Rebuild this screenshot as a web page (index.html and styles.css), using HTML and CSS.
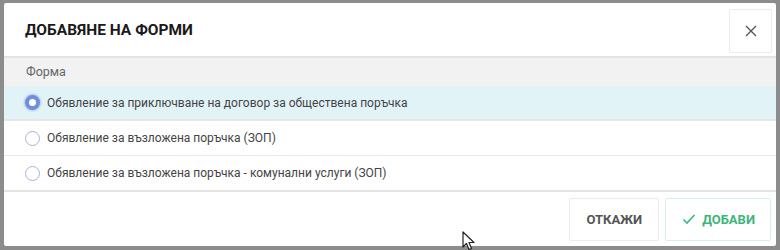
FILE: index.html
```html
<!DOCTYPE html>
<html>
<head>
    <meta charset="UTF-8">
    <title>Добавяне на форми</title>
    <link rel="stylesheet" href="styles.css">
</head>
<body>
    <div class="modal">
        <div class="modal-head">
            <h3>ДОБАВЯНЕ НА ФОРМИ</h3>
            <button class="close-btn" type="button">
                <svg width="12" height="12" viewBox="0 0 12 12"><path d="M1 1L11 11M11 1L1 11" stroke="#555" stroke-width="1.4"/></svg>
            </button>
        </div>
        <div class="modal-body">
            <div class="group-label">Форма</div>
            <ul class="options">
                <li class="selected"><span class="radio"></span>Обявление за приключване на договор за обществена поръчка</li>
                <li><span class="radio"></span>Обявление за възложена поръчка (ЗОП)</li>
                <li><span class="radio"></span>Обявление за възложена поръчка - комунални услуги (ЗОП)</li>
            </ul>
        </div>
        <div class="modal-foot">
            <button class="btn" type="button">ОТКАЖИ</button>
            <button class="btn btn-ok" type="button">
                <svg width="14" height="12" viewBox="0 0 14 12"><path d="M1.5 6.5L5 10L12.5 2" fill="none" stroke="#3db57b" stroke-width="1.6"/></svg>
                ДОБАВИ
            </button>
        </div>
    </div>
    <svg class="cursor" width="14" height="20" viewBox="0 0 14 20"><path d="M1 1L1 16L4.5 12.5L7 18.5L9.5 17.5L7 11.5L12 11.5Z" fill="#fff" stroke="#222" stroke-width="1.2" stroke-linejoin="round"/></svg>
</body>
</html>
```

FILE: styles.css
```css
* {
    margin: 0;
    padding: 0;
    box-sizing: border-box;
}
html, body {
    height: 100%;
}
body {
    background-color: #8c8c8c;
    font-family: Roboto, "Noto Sans", Arial, sans-serif;
    color: #444;
    padding: 3px 4px 4px 4px;
    position: relative;
}
ul, li {
    list-style: none;
}
button {
    font-family: inherit;
    background: #fff;
    cursor: pointer;
}
.modal {
    background-color: #fff;
    height: 243px;
    display: flex;
    flex-direction: column;
    border-radius: 2px;
}
.modal-head {
    height: 55px;
    display: flex;
    align-items: center;
    justify-content: space-between;
    padding: 0 4px 0 21px;
    border-bottom: 2px solid #e4e4e4;
}
.modal-head h3 {
    font-size: 15.5px;
    font-weight: 700;
    color: #1a1a1a;
}
.close-btn {
    width: 43px;
    height: 44px;
    border: 1px solid #ececec;
    border-radius: 2px;
    display: flex;
    align-items: center;
    justify-content: center;
    margin-top: 2px;
}
.modal-body {
    border-bottom: 2px solid #e4e4e4;
}
.group-label {
    background-color: #f2f2f2;
    height: 28px;
    line-height: 28px;
    padding-left: 22px;
    font-size: 12.5px;
    color: #666;
}
.options li {
    height: 35px;
    display: flex;
    align-items: center;
    padding-left: 21px;
    font-size: 12px;
    color: #444;
    border-top: 1px solid #e8e8e8;
}
.options li:first-child {
    border-top: none;
    height: 34px;
}
.options li.selected {
    background-color: #e2f3f8;
    border-bottom: 1px solid #e0e8ea;
}
.radio {
    width: 15px;
    height: 15px;
    border: 1px solid #aab2dc;
    border-radius: 50%;
    background: #fff;
    margin-right: 7px;
    flex-shrink: 0;
}
.selected .radio {
    border: 4px solid #6f8fd8;
    box-shadow: 0 0 2px 1px #a9c4ea;
}
.modal-foot {
    flex: 1;
    display: flex;
    justify-content: flex-end;
    align-items: center;
    gap: 6px;
    padding: 0 5px 0 0;
}
.btn {
    height: 43px;
    border: 1px solid #ececec;
    border-radius: 2px;
    font-size: 13px;
    font-weight: 700;
    color: #555;
    padding: 0 16px;
    display: flex;
    align-items: center;
    gap: 6px;
}
.btn-ok {
    color: #3db57b;
    border-color: #d7efe6;
    padding: 0 15px 0 16px;
}
.cursor {
    position: absolute;
    left: 462px;
    top: 231px;
}
```
